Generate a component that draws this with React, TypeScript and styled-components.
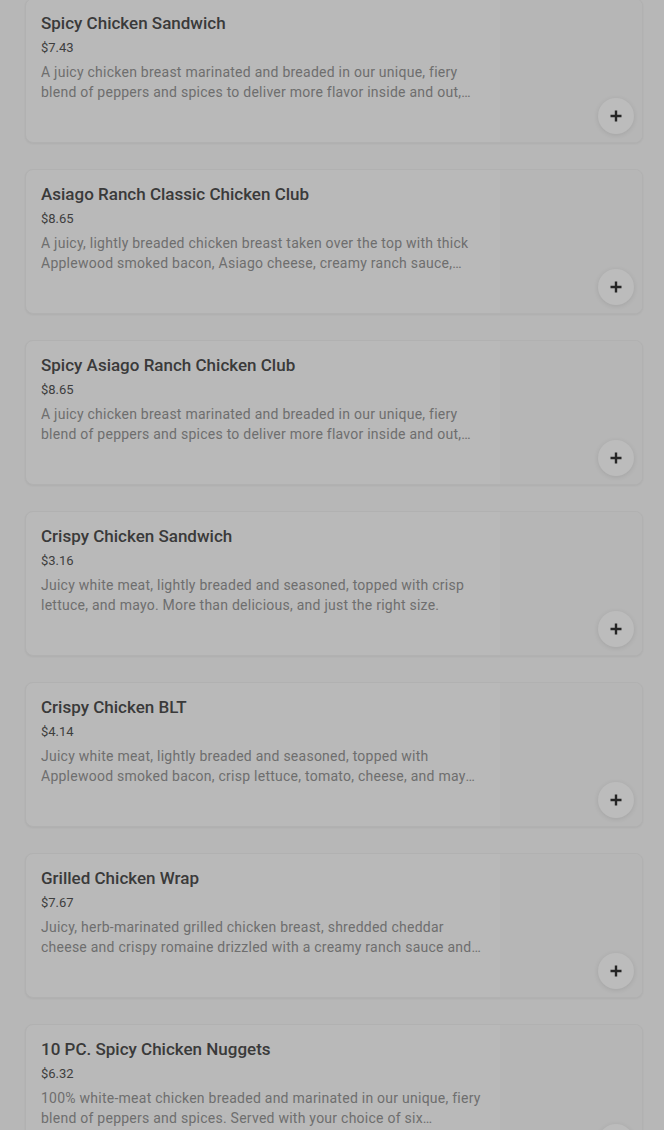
import React from "react";
import styled, { createGlobalStyle } from "styled-components";

const Global = createGlobalStyle`
  html, body { margin: 0; padding: 0; background: #b7b7b7; }
  body { font-family: Roboto, "Liberation Sans", sans-serif; overflow: hidden; }
`;

const List = styled.div`
  display: flex;
  flex-direction: column;
  gap: 26px;
  padding: 0 21px 0 25px;
  margin-top: -2px;
`;

const Card = styled.div`
  position: relative;
  display: flex;
  height: 145px;
  box-sizing: border-box;
  background: #b9b9b9;
  border: 1px solid #b1b1b1;
  border-radius: 8px;
  box-shadow: 0 1px 2px rgba(0, 0, 0, 0.05);
  overflow: hidden;
`;

const Info = styled.div`
  flex: 1;
  min-width: 0;
  padding: 12px 18px 0 15px;
  display: flex;
  flex-direction: column;
`;

const Title = styled.div`
  font-size: 17px;
  line-height: 24px;
  font-weight: 500;
  color: #3a3a3a;
`;

const Price = styled.div`
  margin-top: 3px;
  font-size: 13px;
  line-height: 20px;
  color: #3e3e3e;
`;

const Desc = styled.div`
  margin-top: 4px;
  font-size: 14px;
  line-height: 20px;
  letter-spacing: 0.25px;
  color: #6e6e6e;
  display: -webkit-box;
  -webkit-line-clamp: 2;
  -webkit-box-orient: vertical;
  overflow: hidden;
`;

const Thumb = styled.div`
  width: 142px;
  flex-shrink: 0;
  background: #b6b6b6;
`;

const AddButton = styled.button`
  position: absolute;
  right: 8px;
  bottom: 8px;
  width: 36px;
  height: 36px;
  border-radius: 50%;
  border: none;
  padding: 0;
  background: #bcbcbc;
  box-shadow: 0 1px 5px rgba(0, 0, 0, 0.1);
  display: flex;
  align-items: center;
  justify-content: center;
`;

const items = [
  {
    title: "Spicy Chicken Sandwich",
    price: "$7.43",
    desc: "A juicy chicken breast marinated and breaded in our unique, fiery blend of peppers and spices to deliver more flavor inside and out, served on a toasted buttered bun with dill pickle chips.",
  },
  {
    title: "Asiago Ranch Classic Chicken Club",
    price: "$8.65",
    desc: "A juicy, lightly breaded chicken breast taken over the top with thick Applewood smoked bacon, Asiago cheese, creamy ranch sauce, crisp lettuce and tomato.",
  },
  {
    title: "Spicy Asiago Ranch Chicken Club",
    price: "$8.65",
    desc: "A juicy chicken breast marinated and breaded in our unique, fiery blend of peppers and spices to deliver more flavor inside and out, topped with Asiago cheese.",
  },
  {
    title: "Crispy Chicken Sandwich",
    price: "$3.16",
    desc: "Juicy white meat, lightly breaded and seasoned, topped with crisp lettuce, and mayo. More than delicious, and just the right size.",
  },
  {
    title: "Crispy Chicken BLT",
    price: "$4.14",
    desc: "Juicy white meat, lightly breaded and seasoned, topped with Applewood smoked bacon, crisp lettuce, tomato, cheese, and mayo on a toasted bun.",
  },
  {
    title: "Grilled Chicken Wrap",
    price: "$7.67",
    desc: "Juicy, herb-marinated grilled chicken breast, shredded cheddar cheese and crispy romaine drizzled with a creamy ranch sauce and wrapped in a warm tortilla.",
  },
  {
    title: "10 PC. Spicy Chicken Nuggets",
    price: "$6.32",
    desc: "100% white-meat chicken breaded and marinated in our unique, fiery blend of peppers and spices. Served with your choice of six delicious dipping sauces.",
  },
];

const Plus = () => (
  <svg width="14" height="14" viewBox="0 0 14 14" aria-hidden="true">
    <path d="M7 1.5v11M1.5 7h11" stroke="#262626" strokeWidth="2.4" strokeLinecap="butt" />
  </svg>
);

export default function App() {
  return (
    <>
      <Global />
      <List>
        {items.map((it) => (
          <Card key={it.title}>
            <Info>
              <Title>{it.title}</Title>
              <Price>{it.price}</Price>
              <Desc>{it.desc}</Desc>
            </Info>
            <Thumb />
            <AddButton aria-label="Add">
              <Plus />
            </AddButton>
          </Card>
        ))}
      </List>
    </>
  );
}
